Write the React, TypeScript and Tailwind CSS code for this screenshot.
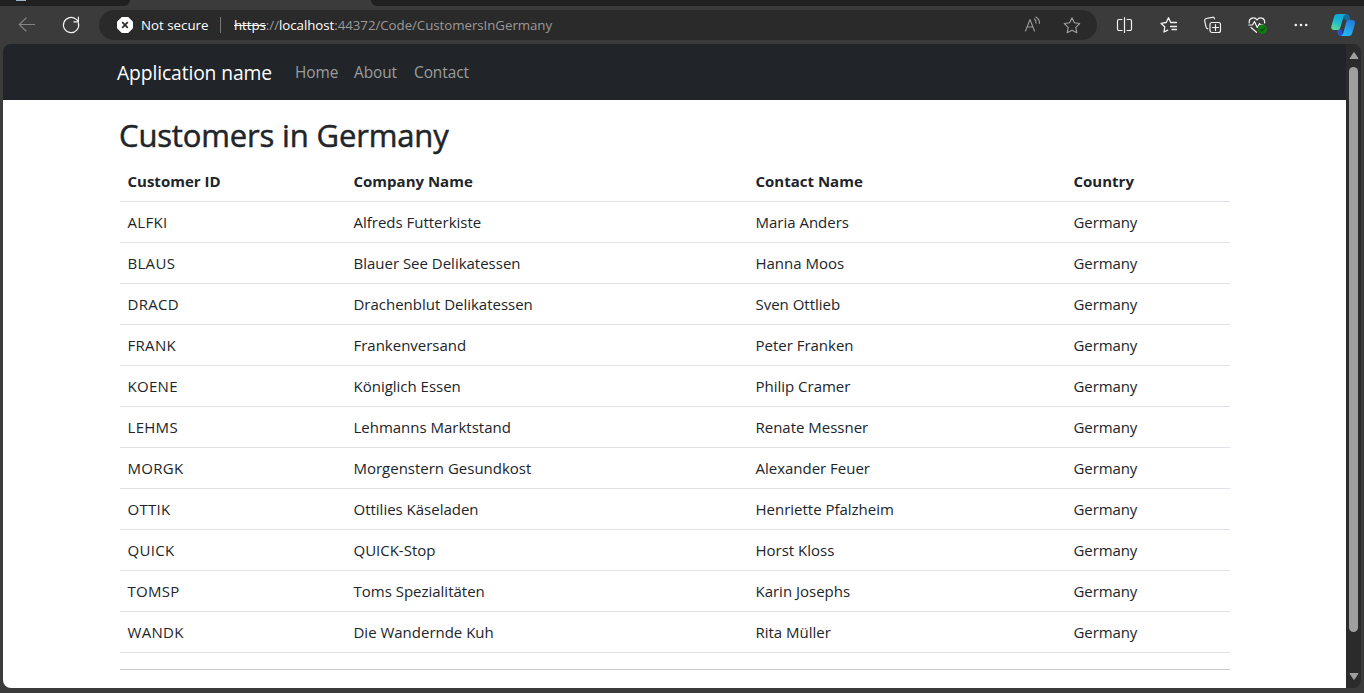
import React from "react";

const customers = [
  ["ALFKI", "Alfreds Futterkiste", "Maria Anders"],
  ["BLAUS", "Blauer See Delikatessen", "Hanna Moos"],
  ["DRACD", "Drachenblut Delikatessen", "Sven Ottlieb"],
  ["FRANK", "Frankenversand", "Peter Franken"],
  ["KOENE", "Königlich Essen", "Philip Cramer"],
  ["LEHMS", "Lehmanns Marktstand", "Renate Messner"],
  ["MORGK", "Morgenstern Gesundkost", "Alexander Feuer"],
  ["OTTIK", "Ottilies Käseladen", "Henriette Pfalzheim"],
  ["QUICK", "QUICK-Stop", "Horst Kloss"],
  ["TOMSP", "Toms Spezialitäten", "Karin Josephs"],
  ["WANDK", "Die Wandernde Kuh", "Rita Müller"],
];

const columns = "grid grid-cols-[226px_402px_318px_1fr] pl-[7.5px]";

function TabStrip() {
  return (
    <div className="flex h-1.5 shrink-0 justify-between bg-[#3b3b3b]">
      <div className="flex w-[130px] rounded-br-md bg-[#202020]">
        <div className="ml-4 h-px w-2.5 bg-[#9db4c4]" />
      </div>
      <div className="w-[993px] rounded-bl-md bg-[#202020]" />
    </div>
  );
}

function Icon({ className, children }: { className: string; children: React.ReactNode }) {
  return (
    <svg
      className={`h-5 w-5 shrink-0 ${className}`}
      viewBox="0 0 20 20"
      fill="none"
      stroke="currentColor"
      strokeWidth="1.1"
      strokeLinecap="round"
      strokeLinejoin="round"
    >
      {children}
    </svg>
  );
}

function Copilot() {
  return (
    <svg className="ml-5 h-6 w-6 shrink-0" viewBox="0 0 24 24">
      <defs>
        <linearGradient id="cpLeft" x1="0.6" y1="0" x2="0.2" y2="1">
          <stop offset="0" stopColor="#11a5d8" />
          <stop offset="0.45" stopColor="#18b9d0" />
          <stop offset="1" stopColor="#63dc92" />
        </linearGradient>
        <linearGradient id="cpRight" x1="0.7" y1="0" x2="0.3" y2="1">
          <stop offset="0" stopColor="#2879dc" />
          <stop offset="0.5" stopColor="#229bea" />
          <stop offset="1" stopColor="#20bdf8" />
        </linearGradient>
      </defs>
      <path d="M12 1h3.500c1.500 0 2.300.8 2.800 2.300L19.500 7.500H14z" fill="#126c9e" />
      <path d="M5.500 16.500H10.500l2 6.500H9.500c-1.500 0-2.200-.9-2.700-2.400z" fill="#2450d8" />
      <path d="M6.500 1h8.300c-1.200.4-1.900 1.600-2.400 3.200L9.300 14.500C8.800 16.300 8 17 6.500 17H3c-2.300 0-3.200-1.700-2.500-4.200l2.600-9C3.700 2 4.700 1 6.500 1z" fill="url(#cpLeft)" />
      <path d="M17.700 7H21c2.700 0 3.500 1.900 2.800 4.300l-2.500 8.500c-.6 2.200-1.700 3.200-3.600 3.200H9.900c1.200-.4 2-1.500 2.500-3.200L15 9.800C15.600 7.800 16.200 7 17.700 7z" fill="url(#cpRight)" />
    </svg>
  );
}

function Toolbar() {
  return (
    <div className="flex h-[38px] shrink-0 items-center bg-[#3b3b3b] text-[#f2f2f2]">
      <Icon className="ml-[17px] text-[#858585]">
        <path d="M17.500 9.500H2.500M9 3L2.300 9.500L9 16" />
      </Icon>
      <Icon className="ml-6">
        <path strokeWidth="1.2" d="M17.400 8A7.600 7.600 0 1 1 15.200 4.400L17.300 6.400M17.400 2.200V6.800H12.800" />
      </Icon>
      <div className="ml-[18px] flex h-[30px] w-[998px] items-center rounded-full bg-[#2a2a2a]">
        <svg className="ml-[18px] h-4 w-4" viewBox="0 0 16 16">
          <path d="M4.800 0h6.400L16 4.800v6.400L11.200 16H4.800L0 11.200V4.800z" fill="#fff" />
          <path d="M5.200 5.200l5.600 5.600M10.800 5.200l-5.600 5.600" stroke="#2a2a2a" strokeWidth="1.700" />
        </svg>
        <span className="ml-2 w-[79px] pt-px text-[13.300px] text-white">Not secure</span>
        <span className="h-4 w-px bg-[#777777]" />
        <span className="ml-[13px] pt-px text-[13.300px] tracking-[-0.050px] whitespace-nowrap text-[#999999]">
          <span className="text-white line-through">https</span>://<span className="text-white">localhost</span>
          :44372/Code/CustomersInGermany
        </span>
        <Icon className="ml-auto text-[#999999]">
          <path d="M3.500 16L8 4.500L12.500 16M5.200 12H10.800M12.300 4C13.700 4.800 14.200 6 14 8.300M13.800 2C16.300 3.500 17.800 5.500 17.400 8.500" />
        </Icon>
        <Icon className="mr-[15px] ml-5 text-[#a0a0a0]">
          <path d="M10 2.800L12.400 7.800L17.700 8.500L13.800 12.300L14.800 17.700L10 15.200L5.200 17.700L6.200 12.300L2.300 8.500L7.600 7.800Z" />
        </Icon>
      </div>
      <Icon className="ml-[18px]">
        <path strokeWidth="1.200" d="M7 4.500H4A1.500 1.500 0 0 0 2.500 6V14A1.500 1.500 0 0 0 4 15.500H7M12 4.500H15A1.500 1.500 0 0 1 16.500 6V14A1.500 1.500 0 0 1 15 15.500H12M9.500 2.500V17.500" />
      </Icon>
      <Icon className="ml-6">
        <path strokeWidth="1.300" d="M13 7.500H17.500M11.500 11.500H17.500M13 14.500H17.500M12.500 7.500H11.700L9.500 2.800L7.200 7.500L2 8.300L5.800 12L5 17L8.700 15.200" />
      </Icon>
      <Icon className="ml-6">
        <path strokeWidth="1.200" d="M4.800 13.800C3.600 13.500 3.200 13 3 12L1.700 5.800C1.500 4.500 2 3.800 3.200 3.500L9.200 2.300C10.500 2 11.200 2.500 11.500 3.800M8.500 7.500H15.500A2 2 0 0 1 17.500 9.500V15.500A2 2 0 0 1 15.500 17.500H9A2 2 0 0 1 7 15.500V9.500A2 2 0 0 1 9 7.500M12.500 9.500V15.500M9.500 12.500H15.500" />
      </Icon>
      <Icon className="ml-6">
        <path strokeWidth="1.200" d="M2.200 8C1.700 3 7.500 1 10 5C12.500 1 18.300 3 17.600 8M1.800 10H5.500L7.500 6.500L10.200 12.500L12.500 8.500L13.500 10H16M4 12.500L9.500 17.300" />
        <circle cx="15.400" cy="14.300" r="4.600" fill="#107c10" stroke="none" />
        <path d="M13.500 14.500L15 16L17.700 13" stroke="#0b3d0b" />
      </Icon>
      <Icon className="ml-6">
        <g fill="currentColor" stroke="none">
          <circle cx="4.800" cy="10" r="1.300" />
          <circle cx="10" cy="10" r="1.300" />
          <circle cx="15.200" cy="10" r="1.300" />
        </g>
      </Icon>
      <Copilot />
    </div>
  );
}

function Scrollbar() {
  return (
    <div className="flex w-[15px] shrink-0 flex-col items-center rounded-r-lg bg-[#2b2b2b]">
      <svg className="mt-[7px] h-2.5 w-2.5" viewBox="0 0 10 10">
        <path d="M5 1.500L9 7.500H1z" fill="#9f9f9f" stroke="#9f9f9f" strokeLinejoin="round" />
      </svg>
      <div className="mt-1.5 h-[565px] w-[9px] rounded-full bg-[#9f9f9f]" />
      <svg className="mt-auto mb-[7px] h-2.5 w-2.5" viewBox="0 0 10 10">
        <path d="M5 8.500L9 2.500H1z" fill="#9f9f9f" stroke="#9f9f9f" strokeLinejoin="round" />
      </svg>
    </div>
  );
}

export default function App() {
  return (
    <div className="flex h-[693px] w-[1364px] flex-col overflow-hidden bg-[#3b3b3b] font-['Open_Sans',sans-serif]">
      <TabStrip />
      <Toolbar />
      <div className="ml-[3px] flex h-[644px] w-[1358px]">
        <div className="flex w-[1343px] flex-col">
          <nav className="flex h-14 shrink-0 items-center rounded-tl-lg bg-[#212529] pt-0.5 pl-[114px] text-[15.400px] tracking-[-0.060px] text-[#9b9d9e]">
            <span className="w-[178px] text-[19.300px] tracking-[-0.120px] text-white">Application name</span>
            <span className="w-[59px]">Home</span>
            <span className="w-[60px]">About</span>
            <span>Contact</span>
          </nav>
          <main className="grow rounded-bl-lg bg-white pr-[116px] pl-[117px] text-[#212529]">
            <h2 className="mt-4 -ml-px h-[38px] text-[31px] leading-[38px] tracking-[-0.150px] whitespace-nowrap [-webkit-text-stroke:0.500px_#212529]">
              Customers in Germany
            </h2>
            <div className="mt-2">
              <div className={`${columns} h-10 items-center border-b border-[#dee2e6] text-[15px] font-bold`}>
                <span>Customer ID</span>
                <span>Company Name</span>
                <span>Contact Name</span>
                <span>Country</span>
              </div>
              {customers.map(([id, company, contact]) => (
                <div key={id} className={`${columns} h-[41px] items-center border-b border-[#dee2e6] text-[15px] tracking-[-0.010px]`}>
                  <span className="tracking-[0.300px]">{id}</span>
                  <span>{company}</span>
                  <span>{contact}</span>
                  <span className="tracking-[-0.100px]">Germany</span>
                </div>
              ))}
            </div>
            <hr className="mt-4 border-[#c7c8c9]" />
          </main>
        </div>
        <Scrollbar />
      </div>
    </div>
  );
}
